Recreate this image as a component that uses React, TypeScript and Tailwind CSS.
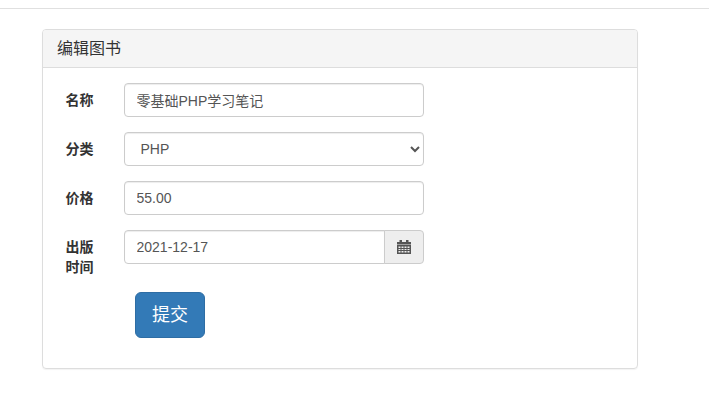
const font = "font-['Liberation_Sans','Noto_Sans_CJK_SC',sans-serif]"
const field = 'h-[34px] w-[300px] rounded-[4px] border border-[#ccc] bg-white pl-[11.5px] pr-3 text-sm text-[#555] shadow-[inset_0_1px_1px_rgba(0,0,0,0.075)] outline-none'

function Row({ label, children }: { label: string; children: React.ReactNode }) {
  return (
    <div className="flex">
      <div className="w-[59px] pl-[0.5px]">
        <label className="block w-[28px] pt-[7px] text-sm leading-[20px] font-bold text-[#333]">{label}</label>
      </div>
      {children}
    </div>
  )
}

export default function App() {
  return (
    <div className={`${font} min-h-[417px] bg-white text-sm text-[#333]`}>
      <div className="pt-2">
        <hr className="border-t border-[#e0e0e0]" />
      </div>

      <div className="mt-5 ml-[42px] w-[596px] h-[340px] rounded-[4px] border border-[#ddd] shadow-[0_1px_1px_rgba(0,0,0,0.05)]">
        <div className="h-[38px] rounded-t-[3px] border-b border-[#ddd] bg-[#f5f5f5] pl-[14px] pr-[15px] text-base leading-[37px]">
          编辑图书
        </div>

        <form className="flex flex-col gap-[15px] pt-[15px] pl-[22px]">
          <Row label="名称">
            <input className={field} defaultValue="零基础PHP学习笔记" />
          </Row>
          <Row label="分类">
            <select className={field} defaultValue="PHP">
              <option>PHP</option>
            </select>
          </Row>
          <Row label="价格">
            <input className={field} defaultValue="55.00" />
          </Row>
          <Row label="出版时间">
            <div className="flex h-[34px] w-[300px]">
              <input
                className="h-[34px] min-w-0 flex-1 rounded-l-[4px] border border-[#ccc] bg-white pl-[11.5px] pr-3 text-sm text-[#555] shadow-[inset_0_1px_1px_rgba(0,0,0,0.075)] outline-none"
                defaultValue="2021-12-17"
              />
              <span className="-ml-px flex w-[40px] items-center justify-center rounded-r-[4px] border border-[#ccc] bg-[#eee] text-[#555]">
                <svg width="14" height="14" viewBox="0 0 14 14" fill="currentColor">
                  <path d="M2.500 0h2.500v2H9V0h2.500v2H14v2.500H0V2h2.500z" />
                  <path
                    fillRule="evenodd"
                    d="M0 5h14v9H0zM1.500 6.500V8h2V6.500zm3 0V8h2V6.500zm3 0V8h2V6.500zm3 0V8h2V6.500zM1.500 9v1h2V9zm3 0v1h2V9zm3 0v1h2V9zm3 0v1h2V9zM1.500 11v1.500h2V11zm3 0v1.500h2V11zm3 0v1.500h2V11zm3 0v1.500h2V11z"
                  />
                </svg>
              </span>
            </div>
          </Row>
          <div className="pl-[70px]">
            <button
              type="button"
              className="h-[46px] w-[70px] rounded-[6px] border border-[#2e6da4] bg-[#337ab7] text-lg text-white"
            >
              提交
            </button>
          </div>
        </form>
      </div>
    </div>
  )
}
